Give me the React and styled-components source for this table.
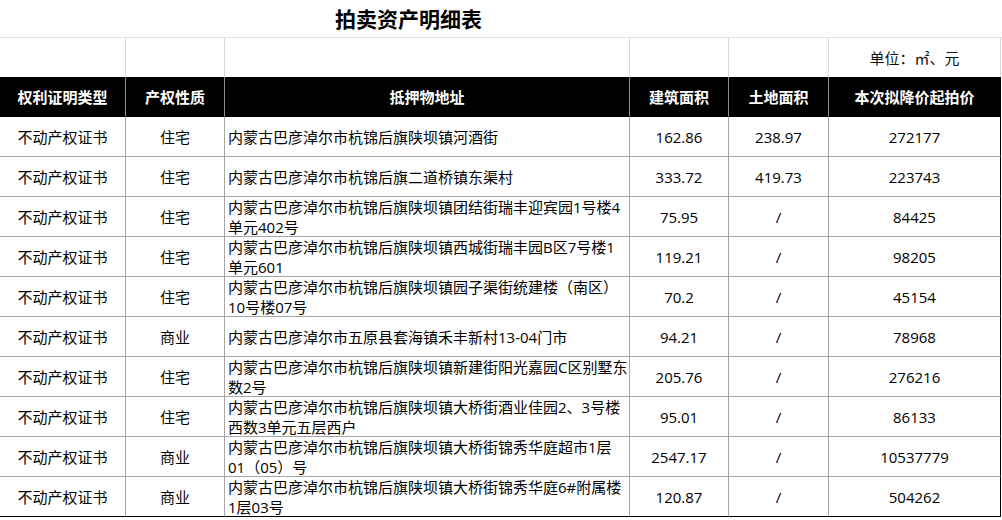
import React from "react"
import styled, { createGlobalStyle } from "styled-components"

const GlobalStyle = createGlobalStyle`
    html, body {
        margin: 0;
        padding: 0;
        background: #ffffff;
    }
    body {
        font-family: "Open Sans", "Noto Sans CJK SC", sans-serif;
        color: #000000;
    }
`

const COLUMNS = "126px 99px 405px 99px 100px 172px"

const Sheet = styled.div`
    width: 1001px;
    display: flex;
    flex-direction: column;
`
const TitleRow = styled.div`
    display: grid;
    grid-template-columns: ${COLUMNS};
    height: 38px;
    border-bottom: 1px solid #e1e1e1;
    box-sizing: border-box;
    width: 1002px;
`
const Title = styled.h1`
    grid-column: 1 / 6;
    margin: 0;
    padding-right: 12px;
    font-family: "Noto Sans CJK SC", sans-serif;
    font-size: 21px;
    font-weight: 700;
    line-height: 36px;
    text-align: center;
`
const Row = styled.div`
    display: grid;
    grid-template-columns: ${COLUMNS};
    height: ${(p) => p.$height || 40}px;
    background: ${(p) => (p.$header ? "#000000" : "transparent")};
`
const Cell = styled.div`
    box-sizing: border-box;
    display: flex;
    align-items: center;
    justify-content: ${(p) => (p.$left ? "flex-start" : "center")};
    padding-left: ${(p) => (p.$left ? "3px" : "0")};
    border-right: 1px solid ${(p) => p.$line};
    border-bottom: 1px solid ${(p) => p.$bottom || "transparent"};
    font-size: 15px;
    line-height: 20px;
    white-space: nowrap;
    overflow: hidden;
    &:last-child {
        border-right-color: ${(p) => p.$edge || p.$line};
    }
`
const HeadCell = styled(Cell)`
    color: #ffffff;
    font-weight: 700;
`
const Unit = styled.span`
    font-family: "Noto Sans CJK SC", sans-serif;
    font-size: 15px;
    padding-top: 2px;
    color: #111111;
`
const Lines = styled.div`
    display: flex;
    flex-direction: column;
`

const headers = ["权利证明类型", "产权性质", "抵押物地址", "建筑面积", "土地面积", "本次拟降价起拍价"]

const rows = [
    ["住宅", ["内蒙古巴彦淖尔市杭锦后旗陕坝镇河酒街"], "162.86", "238.97", "272177"],
    ["住宅", ["内蒙古巴彦淖尔市杭锦后旗二道桥镇东渠村"], "333.72", "419.73", "223743"],
    ["住宅", ["内蒙古巴彦淖尔市杭锦后旗陕坝镇团结街瑞丰迎宾园1号楼4", "单元402号"], "75.95", "/", "84425"],
    ["住宅", ["内蒙古巴彦淖尔市杭锦后旗陕坝镇西城街瑞丰园B区7号楼1", "单元601"], "119.21", "/", "98205"],
    ["住宅", ["内蒙古巴彦淖尔市杭锦后旗陕坝镇园子渠街统建楼（南区）", "10号楼07号"], "70.2", "/", "45154"],
    ["商业", ["内蒙古巴彦淖尔市五原县套海镇禾丰新村13-04门市"], "94.21", "/", "78968"],
    ["住宅", ["内蒙古巴彦淖尔市杭锦后旗陕坝镇新建街阳光嘉园C区别墅东", "数2号"], "205.76", "/", "276216"],
    ["住宅", ["内蒙古巴彦淖尔市杭锦后旗陕坝镇大桥街酒业佳园2、3号楼", "西数3单元五层西户"], "95.01", "/", "86133"],
    ["商业", ["内蒙古巴彦淖尔市杭锦后旗陕坝镇大桥街锦秀华庭超市1层", "01（05）号"], "2547.17", "/", "10537779"],
    ["商业", ["内蒙古巴彦淖尔市杭锦后旗陕坝镇大桥街锦秀华庭6#附属楼", "1层03号"], "120.87", "/", "504262"],
]

export default function App() {
    return (
        <Sheet>
            <GlobalStyle />
            <TitleRow>
                <Title>拍卖资产明细表</Title>
            </TitleRow>
            <Row $height={39}>
                {[0, 1, 2, 3, 4].map((i) => (
                    <Cell key={i} $line="#dadada" />
                ))}
                <Cell $line="#dadada">
                    <Unit>单位：㎡、元</Unit>
                </Cell>
            </Row>
            <Row $header>
                {headers.map((h) => (
                    <HeadCell key={h} $line="#8c8c8c" $edge="#000000">{h}</HeadCell>
                ))}
            </Row>
            {rows.map((row, i) => {
                const bottom = i === rows.length - 1 ? "#000000" : "#a6a6a6"
                const [kind, address, building, land, price] = row
                return (
                    <Row key={i}>
                        <Cell $line="#a6a6a6" $bottom={bottom}>不动产权证书</Cell>
                        <Cell $line="#a6a6a6" $bottom={bottom}>{kind}</Cell>
                        <Cell $line="#a6a6a6" $bottom={bottom} $left>
                            <Lines>
                                {address.map((line) => (
                                    <span key={line}>{line}</span>
                                ))}
                            </Lines>
                        </Cell>
                        <Cell $line="#a6a6a6" $bottom={bottom}>{building}</Cell>
                        <Cell $line="#a6a6a6" $bottom={bottom}>{land}</Cell>
                        <Cell $line="#a6a6a6" $bottom={bottom} $edge="#000000">{price}</Cell>
                    </Row>
                )
            })}
        </Sheet>
    )
}
